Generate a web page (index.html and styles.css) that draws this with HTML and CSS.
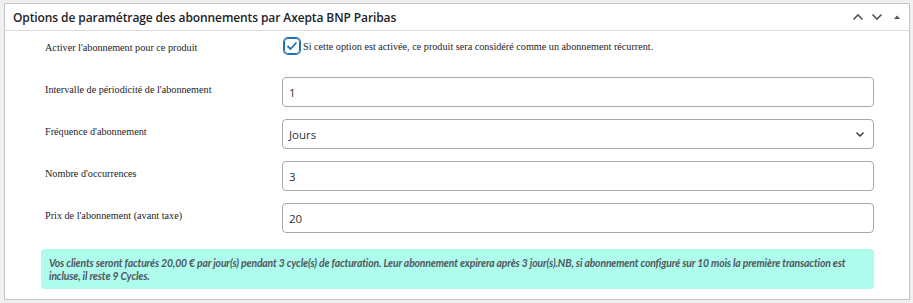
FILE: index.html
```html
<!DOCTYPE html>
<html lang="fr">
<head>
<meta charset="utf-8">
<title>Options abonnements</title>
<link rel="stylesheet" href="styles.css">
</head>
<body>
<div class="panel">
  <div class="panel-head">
    <h2 class="panel-title">Options de paramétrage des abonnements par Axepta BNP Paribas</h2>
    <div class="panel-actions">
      <svg class="act" width="12" height="8" viewBox="0 0 12 8"><path d="M1.5 6.5 L6 2 L10.5 6.5" fill="none" stroke="#50575e" stroke-width="1.6"/></svg>
      <svg class="act" width="12" height="8" viewBox="0 0 12 8"><path d="M1.5 1.5 L6 6 L10.5 1.5" fill="none" stroke="#50575e" stroke-width="1.6"/></svg>
      <svg class="act small" width="8" height="6" viewBox="0 0 8 6"><path d="M1 5 L4 1.5 L7 5 Z" fill="#50575e"/></svg>
    </div>
  </div>
  <div class="panel-body">
    <div class="row row-check">
      <div class="label">Activer l'abonnement pour ce produit</div>
      <div class="field check-field">
        <span class="checkbox"><svg width="12" height="10" viewBox="0 0 12 10"><path d="M1.5 5 L4.5 8 L10.5 1.5" fill="none" stroke="#2271b1" stroke-width="1.8"/></svg></span>
        <span class="desc">Si cette option est activée, ce produit sera considéré comme un abonnement récurrent.</span>
      </div>
    </div>
    <div class="row">
      <div class="label">Intervalle de périodicité de l'abonnement</div>
      <div class="field"><div class="input">1</div></div>
    </div>
    <div class="row">
      <div class="label">Fréquence d'abonnement</div>
      <div class="field"><div class="input select"><span>Jours</span>
        <svg width="10" height="7" viewBox="0 0 10 7"><path d="M1.5 1.5 L5 5 L8.5 1.5" fill="none" stroke="#2c3338" stroke-width="1.4"/></svg></div></div>
    </div>
    <div class="row">
      <div class="label">Nombre d'occurrences</div>
      <div class="field"><div class="input">3</div></div>
    </div>
    <div class="row row-last">
      <div class="label">Prix de l'abonnement (avant taxe)</div>
      <div class="field"><div class="input">20</div></div>
    </div>
    <div class="notice">Vos clients seront facturés 20,00 € par jour(s) pendant 3 cycle(s) de facturation. Leur abonnement expirera après 3 jour(s).NB, si abonnement configuré sur 10 mois la première transaction est incluse, il reste 9 Cycles.</div>
  </div>
</div>
</body>
</html>
```
FILE: styles.css
```css
html, body {
  margin: 0;
  padding: 0;
  background: #f0f0f1;
}
body {
  padding: 3px 4px 0 4px;
  width: 906px;
}
.panel {
  background: #fff;
  border: 1px solid #c3c4c7;
  height: 297px;
  box-sizing: border-box;
}
.panel-head {
  display: flex;
  align-items: center;
  height: 27px;
  box-sizing: border-box;
  border-bottom: 1px solid #dcdcde;
  padding: 0 8px 0 8px;
}
.panel-title {
  flex: 1;
  margin: 0;
  font-family: "Open Sans", sans-serif;
  font-size: 12px;
  font-weight: 600;
  color: #1d2327;
  letter-spacing: -0.1px;
}
.panel-actions {
  display: flex;
  align-items: center;
  gap: 7px;
}
.act { display: block; }
.act.small { margin-left: 3px; }
.panel-body {
  padding: 9px 35px 0 36px;
}
.row {
  display: grid;
  grid-template-columns: 237px 1fr;
  padding-left: 4px;
  margin-bottom: 12px;
}
.row-check {
  margin-bottom: 23px;
  align-items: center;
}
.row-last { margin-bottom: 0; }
.label {
  font-family: "Liberation Serif", serif;
  font-size: 10.2px;
  color: #1d2327;
  padding-top: 7px;
}
.row-check .label { padding-top: 0; }
.check-field {
  display: flex;
  align-items: center;
  gap: 3px;
  padding-left: 2px;
  margin-top: -2px;
}
.checkbox {
  width: 16px;
  height: 16px;
  box-sizing: border-box;
  border: 1px solid #2271b1;
  border-radius: 4px;
  display: flex;
  align-items: center;
  justify-content: center;
  box-shadow: 0 0 0 1px #2271b1;
}
.desc {
  font-family: "Liberation Serif", serif;
  font-size: 10.2px;
  color: #1d2327;
}
.input {
  height: 30px;
  box-sizing: border-box;
  border: 1px solid #a7aaad;
  border-radius: 4px;
  padding: 0 6px;
  display: flex;
  align-items: center;
  font-family: "Open Sans", sans-serif;
  font-size: 11.5px;
  color: #2c3338;
}
.select {
  justify-content: space-between;
  padding-right: 8px;
}
.notice {
  margin-top: 16px;
  background: #adfcec;
  border-radius: 4px;
  padding: 8px 10px 6px 8px;
  font-family: "Lato", sans-serif;
  font-size: 10.4px;
  letter-spacing: -0.15px;
  font-style: italic;
  font-weight: 700;
  line-height: 13px;
  color: #50575e;
}
```
